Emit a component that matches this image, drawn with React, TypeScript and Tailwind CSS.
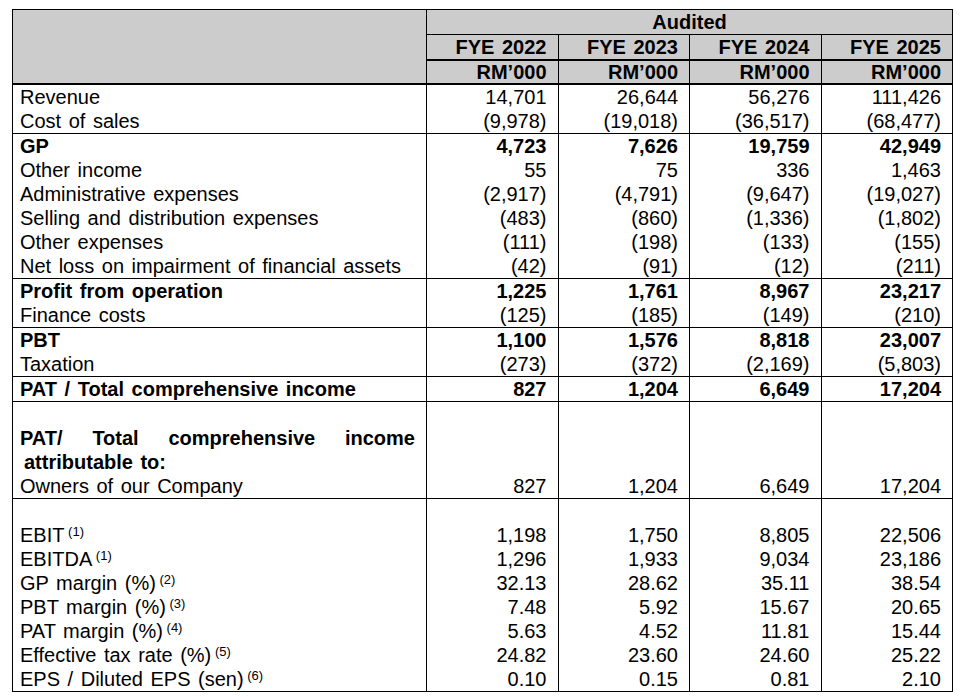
import type { ReactNode } from 'react'

type Row = {
  label?: ReactNode
  values?: string[]
  bold?: boolean
}

const years = ['FYE 2022', 'FYE 2023', 'FYE 2024', 'FYE 2025']

function Note({ n }: { n: number }) {
  return <sup className="text-[13px] [word-spacing:0px]"> ({n})</sup>
}

const sections: Row[][] = [
  [
    { label: 'Revenue', values: ['14,701', '26,644', '56,276', '111,426'] },
    { label: 'Cost of sales', values: ['(9,978)', '(19,018)', '(36,517)', '(68,477)'] },
  ],
  [
    { label: 'GP', values: ['4,723', '7,626', '19,759', '42,949'], bold: true },
    { label: 'Other income', values: ['55', '75', '336', '1,463'] },
    { label: 'Administrative expenses', values: ['(2,917)', '(4,791)', '(9,647)', '(19,027)'] },
    { label: 'Selling and distribution expenses', values: ['(483)', '(860)', '(1,336)', '(1,802)'] },
    { label: 'Other expenses', values: ['(111)', '(198)', '(133)', '(155)'] },
    { label: 'Net loss on impairment of financial assets', values: ['(42)', '(91)', '(12)', '(211)'] },
  ],
  [
    { label: 'Profit from operation', values: ['1,225', '1,761', '8,967', '23,217'], bold: true },
    { label: 'Finance costs', values: ['(125)', '(185)', '(149)', '(210)'] },
  ],
  [
    { label: 'PBT', values: ['1,100', '1,576', '8,818', '23,007'], bold: true },
    { label: 'Taxation', values: ['(273)', '(372)', '(2,169)', '(5,803)'] },
  ],
  [
    { label: 'PAT / Total comprehensive income', values: ['827', '1,204', '6,649', '17,204'], bold: true },
  ],
  [
    {},
    {
      label: (
        <span className="flex justify-between pr-[11px]">
          <span>PAT/</span>
          <span>Total</span>
          <span>comprehensive</span>
          <span>income</span>
        </span>
      ),
      bold: true,
    },
    { label: <span className="pl-[4px]">attributable to:</span>, bold: true },
    { label: 'Owners of our Company', values: ['827', '1,204', '6,649', '17,204'] },
  ],
  [
    {},
    { label: <>EBIT<Note n={1} /></>, values: ['1,198', '1,750', '8,805', '22,506'] },
    { label: <>EBITDA<Note n={1} /></>, values: ['1,296', '1,933', '9,034', '23,186'] },
    { label: <>GP margin (%)<Note n={2} /></>, values: ['32.13', '28.62', '35.11', '38.54'] },
    { label: <>PBT margin (%)<Note n={3} /></>, values: ['7.48', '5.92', '15.67', '20.65'] },
    { label: <>PAT margin (%)<Note n={4} /></>, values: ['5.63', '4.52', '11.81', '15.44'] },
    { label: <>Effective tax rate (%)<Note n={5} /></>, values: ['24.82', '23.60', '24.60', '25.22'] },
    { label: <>EPS / Diluted EPS (sen)<Note n={6} /></>, values: ['0.10', '0.15', '0.81', '2.10'] },
  ],
]

export default function App() {
  return (
    <div className="w-[965px] h-[700px] bg-white text-black text-[20px] leading-[24px] [word-spacing:2px] font-['Liberation_Sans',Arial,sans-serif]">
      <div className="ml-[12px] mt-[9px] w-[941px] border border-black">
        {/* Header */}
        <div className="flex border-b-2 border-black bg-[#cccccc] font-bold">
          <div className="w-[413px] shrink-0" />
          <div className="flex-1 flex flex-col border-l border-black">
            <div className="h-[25px] text-center border-b border-black">Audited</div>
            <div className="h-[26px] flex border-b-2 border-black">
              {years.map((y, i) => (
                <div key={y} className={`flex-1 text-right pr-[11px] ${i > 0 ? 'border-l border-black' : ''}`}>
                  {y}
                </div>
              ))}
            </div>
            <div className="h-[22px] flex leading-[22px]">
              {years.map((y, i) => (
                <div key={y} className={`flex-1 text-right pr-[11px] ${i > 0 ? 'border-l border-black' : ''}`}>
                  RM’000
                </div>
              ))}
            </div>
          </div>
        </div>

        {/* Body sections */}
        {sections.map((rows, si) => (
          <div key={si} className={`flex ${si > 0 ? 'border-t border-black' : ''}`}>
            <div className="w-[413px] shrink-0 pl-[7px]">
              {rows.map((r, ri) => (
                <div key={ri} className={`h-[24px] whitespace-nowrap ${r.bold ? 'font-bold' : ''}`}>
                  {r.label}
                </div>
              ))}
            </div>
            {years.map((y, ci) => (
              <div key={y} className="flex-1 border-l border-black pr-[11px] text-right">
                {rows.map((r, ri) => (
                  <div key={ri} className={`h-[24px] ${r.bold ? 'font-bold' : ''}`}>
                    {r.values ? r.values[ci] : ''}
                  </div>
                ))}
              </div>
            ))}
          </div>
        ))}
      </div>
    </div>
  )
}
